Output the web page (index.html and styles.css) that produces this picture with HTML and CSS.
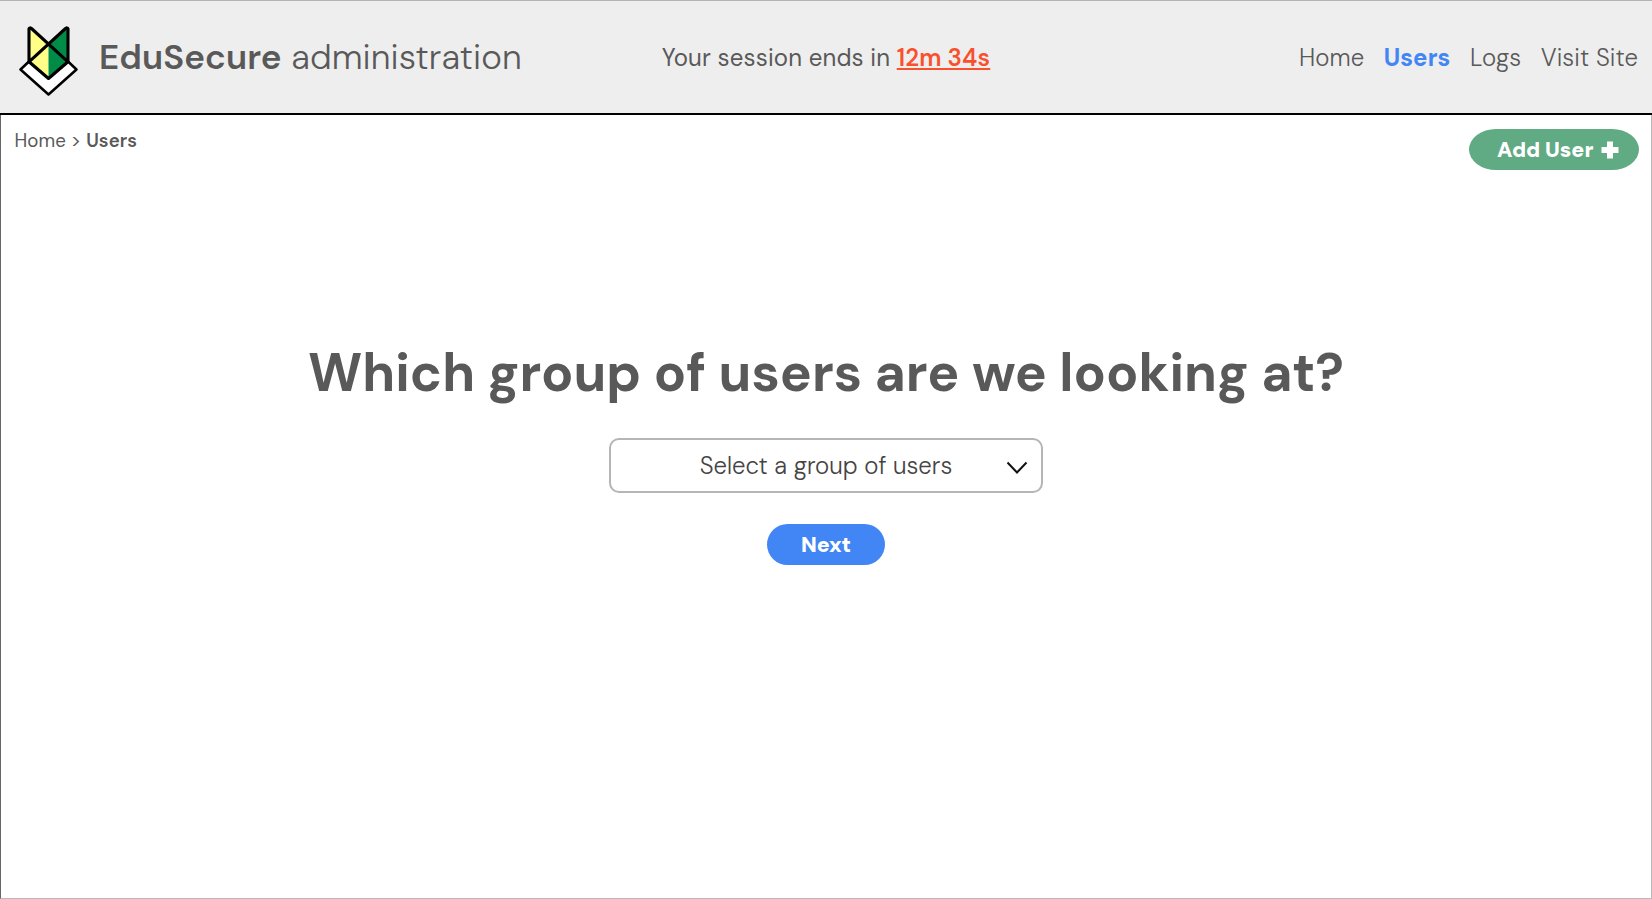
FILE: index.html
```html
<!DOCTYPE html>
<html lang="en">
<head>
<meta charset="utf-8">
<title>EduSecure administration</title>
<link rel="stylesheet" href="styles.css">
</head>
<body>
<header class="header">
  <div class="brand">
    <svg class="logo" viewBox="0 0 60 72" width="60" height="72">
      <path d="M11 38 2.500 45.500 30.500 71 58.500 45.500 50 38" fill="#fff"/>
      <path d="M11.500 37 2.500 45.500 30.500 70.500 58.500 45.500 49.500 37" fill="none" stroke="#000" stroke-width="2.500" stroke-linejoin="round"/>
      <path d="M11.500 4.500 30.500 20V55L11.500 37.500Z" fill="#ffff87"/>
      <path d="M49.500 4.500 30.500 20V55L49.500 37.500Z" fill="#008c46"/>
      <path d="M11 37.800V4.800Q11.500 3.200 13.500 4.500L50 37.800 30.500 54.500 11 37.800 47.500 4.500Q49.500 3.200 50 4.800V37.800" fill="none" stroke="#000" stroke-width="3.100" stroke-linejoin="round"/>
    </svg>
    <h1 class="title"><b class="title-name">EduSecure</b> <span class="title-section">administration</span></h1>
  </div>
  <p class="session"><span>Your session ends in</span> <strong class="countdown">12m 34s</strong></p>
  <nav class="nav">
    <a class="nav-home">Home</a>
    <a class="active">Users</a>
    <a class="nav-logs">Logs</a>
    <a class="nav-visit">Visit Site</a>
  </nav>
</header>
<main class="main">
  <div class="toolbar">
    <div class="crumbs"><span>Home</span><span class="sep">&gt;</span><b>Users</b></div>
    <button class="add"><span>Add User</span><svg width="18" height="18" viewBox="0 0 18 18"><path d="M6 .5h6V6h5.500v6H12v5.500H6V12H.5V6H6Z" fill="#fff"/></svg></button>
  </div>
  <section class="picker">
    <h2 class="question">Which group of users are we looking at?</h2>
    <div class="select"><span>Select a group of users</span>
      <svg class="chevron" width="22" height="14" viewBox="0 0 22 14"><path d="M1.500 1.500 11 11.500 20.500 1.500" fill="none" stroke="#111" stroke-width="2"/></svg>
    </div>
    <button class="next">Next</button>
  </section>
</main>
</body>
</html>
```
FILE: styles.css
```css
* { box-sizing: border-box; }
body {
  margin: 0;
  height: 899px;
  display: flex;
  flex-direction: column;
  overflow: hidden;
  background: #fff;
  color: #595959;
  font-family: "DM Sans", Inter, "Open Sans", sans-serif;
}
h1, h2, p { margin: 0; }
button { border: 0; color: #fff; font-family: inherit; font-weight: 900; }
.header {
  height: 115px;
  flex: none;
  display: grid;
  grid-template-columns: 1fr auto 1fr;
  align-items: center;
  padding: 0 14px 0 18px;
  background: #eee;
  border-top: 1px solid #b3b3b3;
  border-bottom: 2px solid #000;
  white-space: nowrap;
}
.brand { display: flex; align-items: center; }
.logo { display: block; margin: 5px 21px 0 0; }
.title { font-size: 35px; line-height: 40px; font-weight: 300; letter-spacing: .08px; }
.title-name { font-weight: 600; }
.session { font-size: 24px; line-height: 28px; letter-spacing: .15px; margin: 1px 4px 0 0; }
.countdown {
  color: #f9502d;
  font-weight: 600;
  text-decoration: underline;
  text-decoration-thickness: 2px;
  text-underline-offset: 2px;
}
.nav { display: flex; justify-content: flex-end; gap: 19.500px; margin-top: 1px; font-size: 24px; line-height: 28px; font-weight: 300; letter-spacing: .1px; }
.nav .active { color: #4285f4; font-weight: 700; }
.main {
  flex: 1;
  border: 1px solid #b9b9b9;
  border-top: 0;
  border-left-color: #666;
}
.toolbar {
  display: flex;
  justify-content: space-between;
  align-items: flex-start;
  height: 55px;
  padding: 14px 12px 0 13.500px;
}
.crumbs { display: flex; font-size: 18.670px; line-height: 24px; letter-spacing: .08px; }
.crumbs .sep { margin: 0 5px; }
.crumbs b { font-weight: 650; }
.add {
  width: 170px;
  height: 41px;
  display: flex;
  align-items: center;
  gap: 8px;
  padding: 0 0 0 28px;
  border-radius: 27px / 20.500px;
  background: #60aa84;
  font-size: 21.330px;
}
.picker { display: flex; flex-direction: column; align-items: center; padding-top: 170px; }
.question { font-size: 53.330px; line-height: 66px; font-weight: 700; white-space: nowrap; }
.select {
  position: relative;
  width: 434px;
  height: 55px;
  margin-top: 32px;
  display: flex;
  align-items: center;
  justify-content: center;
  border: 2px solid #b5b5b5;
  border-radius: 10px;
  color: #444;
  font-size: 24px;
  font-weight: 300;
}
.chevron { position: absolute; right: 13px; top: 21px; }
.next {
  width: 118px;
  height: 41px;
  margin-top: 31px;
  border-radius: 20.500px;
  background: #4285f4;
  font-size: 21.330px;
}
```
